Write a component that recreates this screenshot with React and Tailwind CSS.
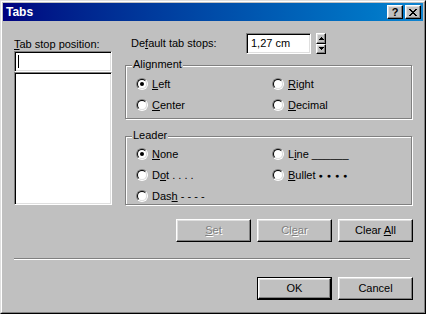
const raised =
  "border border-t-white border-l-white border-b-black border-r-black shadow-[inset_-1px_-1px_0_#808080,inset_1px_1px_0_#dfdfdf] bg-[#c0c0c0]"
const sunken =
  "border border-t-[#808080] border-l-[#808080] border-b-white border-r-white shadow-[inset_1px_1px_0_#000,inset_-1px_-1px_0_#dfdfdf] bg-white"

function U({ children }) {
  return <span className="underline decoration-1 underline-offset-[1px]">{children}</span>
}

function Radio({ checked, children }) {
  return (
    <div className="flex items-center h-[12px] gap-[4px]">
      <div className="w-[12px] h-[12px] shrink-0 rounded-full border border-t-[#808080] border-l-[#808080] border-b-white border-r-white">
        <div className="w-full h-full rounded-full border border-t-black border-l-black border-b-[#dfdfdf] border-r-[#dfdfdf] bg-white flex items-center justify-center">
          {checked && <div className="w-[4px] h-[4px] rounded-full bg-black" />}
        </div>
      </div>
      <span className="leading-[13px] whitespace-pre">{children}</span>
    </div>
  )
}

function Group({ label, className, children }) {
  return (
    <div className={`relative ${className}`}>
      {/* etched frame */}
      <div className="absolute left-[1px] top-[1px] right-0 bottom-0 border border-white" />
      <div className="absolute left-0 top-0 right-[1px] bottom-[1px] border border-[#808080]" />
      <span className="absolute left-[7px] top-[-7px] px-[1px] bg-[#c0c0c0] leading-[13px]">
        {label}
      </span>
      <div className="relative">{children}</div>
    </div>
  )
}

function Button({ children, disabled, isDefault }) {
  const label = disabled ? (
    <span className="text-[#808080] [text-shadow:1px_1px_0_#fff]">{children}</span>
  ) : (
    <span>{children}</span>
  )
  if (isDefault) {
    return (
      <div className="w-[75px] h-[23px] border border-black">
        <div className={`w-full h-full flex items-center justify-center ${raised}`}>{label}</div>
      </div>
    )
  }
  return (
    <div className={`w-[75px] h-[23px] flex items-center justify-center ${raised}`}>{label}</div>
  )
}

function SpinHalf({ up }) {
  return (
    <div className={`flex-1 flex items-center justify-center ${raised}`}>
      <svg width="5" height="3" viewBox="0 0 5 3" shapeRendering="crispEdges">
        {up ? (
          <>
            <rect x="2" y="0" width="1" height="1" fill="#000" />
            <rect x="1" y="1" width="3" height="1" fill="#000" />
            <rect x="0" y="2" width="5" height="1" fill="#000" />
          </>
        ) : (
          <>
            <rect x="0" y="0" width="5" height="1" fill="#000" />
            <rect x="1" y="1" width="3" height="1" fill="#000" />
            <rect x="2" y="2" width="1" height="1" fill="#000" />
          </>
        )}
      </svg>
    </div>
  )
}

function CloseGlyph() {
  const px = [
    [0, 0], [1, 0], [6, 0], [7, 0],
    [1, 1], [2, 1], [5, 1], [6, 1],
    [2, 2], [3, 2], [4, 2], [5, 2],
    [3, 3], [4, 3],
    [2, 4], [3, 4], [4, 4], [5, 4],
    [1, 5], [2, 5], [5, 5], [6, 5],
    [0, 6], [1, 6], [6, 6], [7, 6],
  ]
  return (
    <svg width="8" height="7" viewBox="0 0 8 7" shapeRendering="crispEdges">
      {px.map(([x, y]) => (
        <rect key={`${x}-${y}`} x={x} y={y} width="1" height="1" fill="#000" />
      ))}
    </svg>
  )
}

export default function App() {
  return (
    <div className="w-[426px] h-[314px] border border-t-[#dfdfdf] border-l-[#dfdfdf] border-b-black border-r-black bg-[#c0c0c0] text-[11px] text-black font-['Liberation_Sans',Arial,sans-serif]">
      <div className="w-full h-full border border-t-white border-l-white border-b-[#808080] border-r-[#808080] p-[1px] flex flex-col">
        {/* title bar */}
        <div className="h-[18px] shrink-0 flex items-center bg-linear-to-r from-[#000080] to-[#1084d0] pl-[3px] pr-[2px]">
          <span className="font-bold text-white text-[12px] leading-[13px]">Tabs</span>
          <div className="ml-auto flex gap-[2px]">
            <div className={`w-[16px] h-[14px] flex items-center justify-center font-bold leading-none ${raised}`}>?</div>
            <div className={`w-[16px] h-[14px] flex items-center justify-center ${raised}`}>
              <CloseGlyph />
            </div>
          </div>
        </div>

        {/* body */}
        <div className="pl-[11px] pr-[10px] flex flex-col">
          <div className="flex">
            {/* tab stop list */}
            <div className="w-[98px] mt-[17px] flex flex-col">
              <div className="leading-[13px]">
                <U>T</U>ab stop position:
              </div>
              <div className={`h-[21px] px-[3px] flex items-center ${sunken}`}>
                <div className="w-[1px] h-[13px] bg-black" />
              </div>
              <div className={`h-[133px] ${sunken}`} />
            </div>

            {/* right side */}
            <div className="ml-[13px] w-[288px] pt-[12px] flex flex-col">
              <div className="flex items-center h-[21px]">
                <span className="w-[121px] pl-[6px] leading-[13px]">
                  De<U>f</U>ault tab stops:
                </span>
                <div className={`w-[65px] h-[21px] flex items-center px-[4px] ${sunken}`}>1,27 cm</div>
                <div className="ml-[5px] w-[10px] h-[21px] flex flex-col">
                  <SpinHalf up />
                  <SpinHalf />
                </div>
              </div>

              <Group label="Alignment" className="mt-[11px] h-[55px]">
                <div className="grid grid-cols-[136px_1fr] gap-y-[9px] pt-[13px] pl-[11px]">
                  <Radio checked><U>L</U>eft</Radio>
                  <Radio><U>R</U>ight</Radio>
                  <Radio><U>C</U>enter</Radio>
                  <Radio><U>D</U>ecimal</Radio>
                </div>
              </Group>

              <Group label="Leader" className="mt-[16px] h-[70px]">
                <div className="grid grid-cols-[136px_1fr] gap-y-[9px] pt-[12px] pl-[11px]">
                  <Radio checked><U>N</U>one</Radio>
                  <Radio>L<U>i</U>ne ______</Radio>
                  <Radio>D<U>o</U>t . . . .</Radio>
                  <Radio>
                    <U>B</U>ullet <span className="text-[7px] tracking-[1px] align-[1px]">● ● ● ●</span>
                  </Radio>
                  <Radio>Das<U>h</U> - - - -</Radio>
                </div>
              </Group>

              <div className="mt-[13px] flex justify-end gap-[6px]">
                <Button disabled><U>S</U>et</Button>
                <Button disabled>Cl<U>e</U>ar</Button>
                <Button>Clear <U>A</U>ll</Button>
              </div>
            </div>
          </div>

          {/* separator */}
          <div className="mt-[16px] mr-[3px] h-[2px] border-t border-t-[#808080] border-b border-b-white" />

          <div className="mt-[17px] flex justify-end gap-[6px]">
            <Button isDefault>OK</Button>
            <Button>Cancel</Button>
          </div>
        </div>
      </div>
    </div>
  )
}
